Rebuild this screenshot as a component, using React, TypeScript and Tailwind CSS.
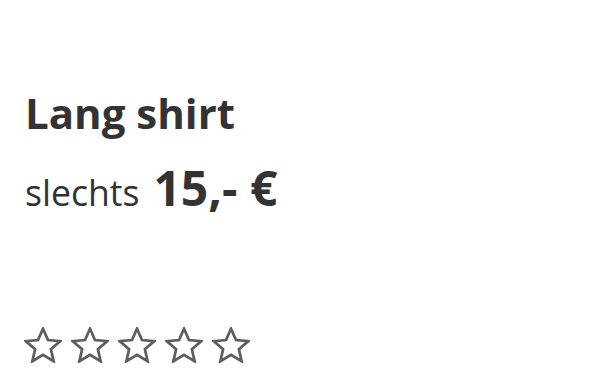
export default function App() {
  const stars = [0, 1, 2, 3, 4];

  return (
    <div className="w-[600px] h-[369px] bg-white text-[#333] font-['Open_Sans',sans-serif] px-[25px] pt-[87px] flex flex-col">
      {/* Title + price */}
      <h1 className="text-[42px] font-bold leading-[52px]">Lang shirt</h1>
      <div className="flex items-baseline gap-[14px] mt-[21px] leading-[56px]">
        <span className="text-[35.6px]">slechts</span>
        <span className="text-[48px] font-bold">15,- €</span>
      </div>

      {/* Rating */}
      <div className="flex gap-[9px] mt-auto mb-[6px] -ml-[1px]">
        {stars.map((i) => (
          <svg
            key={i}
            width="38"
            height="36"
            viewBox="1 1 22 21"
            fill="none"
            stroke="#5e5e5e"
            strokeWidth="1.6"
            strokeLinejoin="miter"
          >
            <polygon points="12,2 14.9,8.6 22,9.3 16.6,14 18.2,21 12,17.3 5.8,21 7.4,14 2,9.3 9.1,8.6" />
          </svg>
        ))}
      </div>
    </div>
  );
}
